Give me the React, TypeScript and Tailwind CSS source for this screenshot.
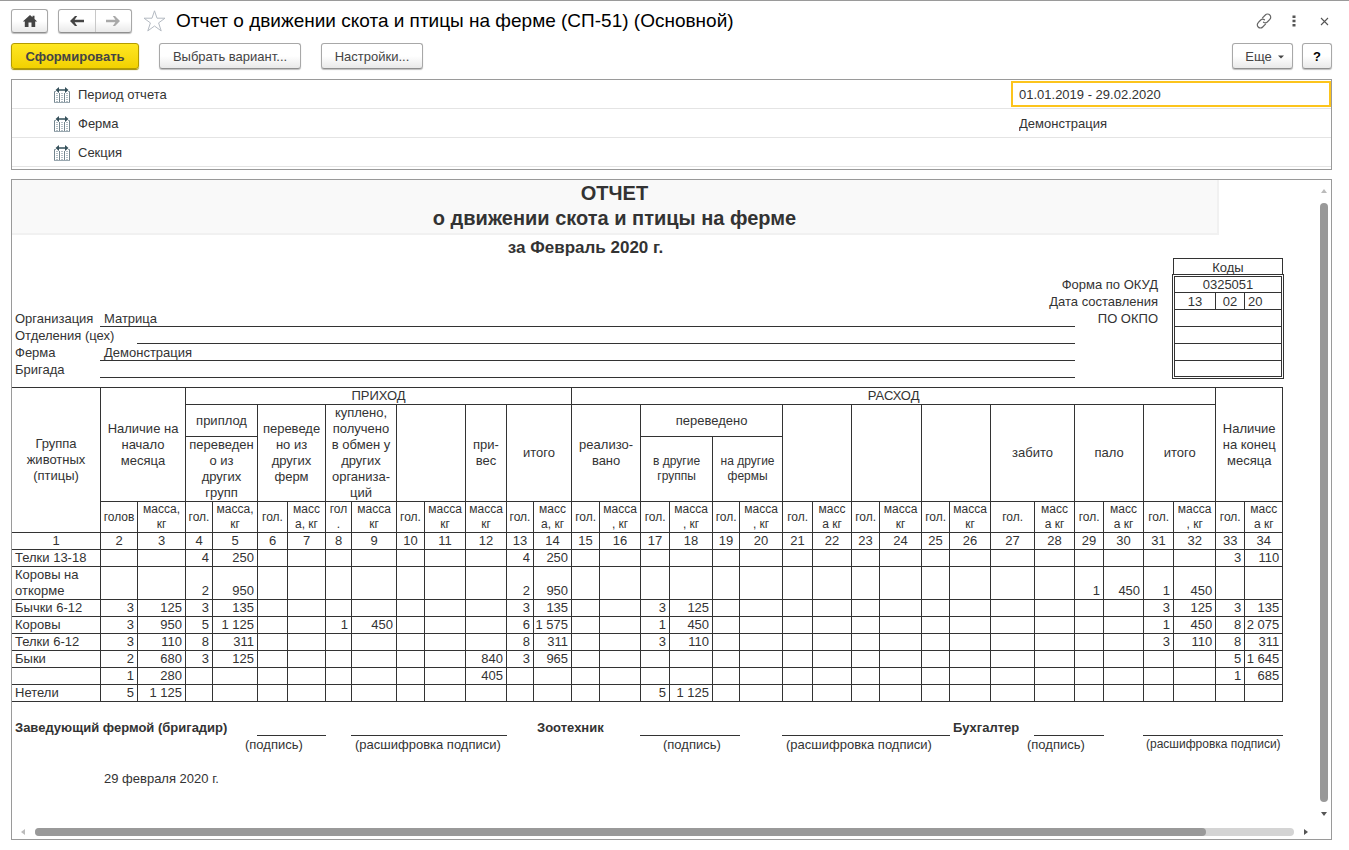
import { Fragment, type ReactNode } from "react";

const columnWidths = [
  89, 37, 48, 27, 45, 30, 38, 26, 45, 28, 41, 41, 27, 38, 28, 41, 29, 43, 27, 43, 30, 39, 28, 42, 28, 41, 44, 40, 29,
  40, 30, 42, 29, 38,
];

const unitLabels = [
  "голов", "масса,|кг", "гол.", "масса,|кг", "гол.", "масс|а, кг", "гол|.", "масса|кг", "гол.", "масса|кг",
  "масса|кг", "гол.", "масс|а, кг", "гол.", "масса|, кг", "гол.", "масса|, кг", "гол.", "масса|, кг", "гол.",
  "масс|а кг", "гол.", "масса|кг", "гол.", "масса|кг", "гол.", "масс|а кг", "гол.", "масс|а кг", "гол.",
  "масса|, кг", "гол.", "масс|а кг",
];

type Row = { name: string; tall?: boolean; values: Record<number, string> };

const rows: Row[] = [
  { name: "Телки 13-18", values: { 4: "4", 5: "250", 13: "4", 14: "250", 33: "3", 34: "110" } },
  {
    name: "Коровы на|откорме",
    tall: true,
    values: { 4: "2", 5: "950", 13: "2", 14: "950", 29: "1", 30: "450", 31: "1", 32: "450" },
  },
  {
    name: "Бычки 6-12",
    values: { 2: "3", 3: "125", 4: "3", 5: "135", 13: "3", 14: "135", 17: "3", 18: "125", 31: "3", 32: "125", 33: "3", 34: "135" },
  },
  {
    name: "Коровы",
    values: { 2: "3", 3: "950", 4: "5", 5: "1 125", 8: "1", 9: "450", 13: "6", 14: "1 575", 17: "1", 18: "450", 31: "1", 32: "450", 33: "8", 34: "2 075" },
  },
  {
    name: "Телки 6-12",
    values: { 2: "3", 3: "110", 4: "8", 5: "311", 13: "8", 14: "311", 17: "3", 18: "110", 31: "3", 32: "110", 33: "8", 34: "311" },
  },
  { name: "Быки", values: { 2: "2", 3: "680", 4: "3", 5: "125", 12: "840", 13: "3", 14: "965", 33: "5", 34: "1 645" } },
  { name: "", values: { 2: "1", 3: "280", 12: "405", 33: "1", 34: "685" } },
  { name: "Нетели", values: { 2: "5", 3: "1 125", 17: "5", 18: "1 125" } },
];

function Lines({ text }: { text: string }) {
  return (
    <>
      {text.split("|").map((line, i) => (
        <Fragment key={i}>
          {i > 0 && <br />}
          {line}
        </Fragment>
      ))}
    </>
  );
}

function Head({ text = "", cols = 1, span = 1, small = false }: { text?: string; cols?: number; span?: number; small?: boolean }) {
  return (
    <th
      colSpan={cols}
      rowSpan={span}
      className={`border-r border-b border-[#333] p-0 text-center align-middle font-normal ${
        small ? "text-[12px] leading-[15px]" : "leading-4"
      }`}
    >
      <Lines text={text} />
    </th>
  );
}

const buttonBase =
  "flex items-center justify-center rounded-[3px] border border-[#a8a8a8] border-b-[#8f8f8f] bg-linear-to-b from-white from-50% to-[#e9e9e9] shadow-[0_1px_1px_#bdbdbd]";

function ActionButton({ children, className }: { children: ReactNode; className: string }) {
  return (
    <button type="button" className={`${buttonBase} h-[26px] pt-px text-[13px] text-[#444] ${className}`}>
      {children}
    </button>
  );
}

function FieldIcon() {
  return (
    <svg width="16" height="16" viewBox="0 0 16 16" className="shrink-0" aria-hidden="true">
      <path d="M.5 4v11.500M5.500 6v9.500M10.500 6v9.500M15.500 4v11.500" stroke="#74868f" fill="none" />
      <path d="M0 15.500h16M0 4.500h2M14 4.500h2" stroke="#9aa8b0" fill="none" />
      <path d="M3 6v9M8 6v9M13 6v9" stroke="#b4bfc5" strokeWidth="2" strokeDasharray="1 1" fill="none" />
      <path d="M1.500 3 5 0v2.200h6V0l3.500 3L11 6V3.800H5V6z" fill="#35505b" />
    </svg>
  );
}

function Arrow({ color, flip }: { color: string; flip?: boolean }) {
  return (
    <svg width="16" height="12" viewBox="0 0 16 12" className={flip ? "rotate-180" : ""} aria-hidden="true">
      <path d="M1 6 6 1h2.200L5.600 4.800H15v2.400H5.600L8.200 11H6z" fill={color} />
    </svg>
  );
}

const filters = [
  { id: "period", label: "Период отчета", value: "01.01.2019 - 29.02.2020", active: true },
  { id: "farm", label: "Ферма", value: "Демонстрация", active: false },
  { id: "section", label: "Секция", value: "", active: false },
];

function Toolbar() {
  return (
    <header>
      <div className="flex h-6 items-center">
        <button type="button" aria-label="Домой" className={`${buttonBase} h-6 w-[37px]`}>
          <svg width="16" height="14" viewBox="0 0 16 14" aria-hidden="true">
            <path d="M8 1 .8 7.600h2V13H6.500V8.500h3V13h3.700V7.600h2L12.500 5V1.700h-2v1.600z" fill="#444" />
          </svg>
        </button>
        <div className={`${buttonBase} ml-[10px] h-6 w-[74px]`}>
          <button type="button" aria-label="Назад" className="flex h-full flex-1 items-center justify-center border-r border-[#c8c8c8]">
            <Arrow color="#444" />
          </button>
          <button type="button" aria-label="Вперед" className="flex h-full flex-1 items-center justify-center">
            <Arrow color="#a9a9a9" flip />
          </button>
        </div>
        <button type="button" aria-label="В избранное" className="ml-[10px]">
          <svg width="24" height="24" viewBox="0 0 24 24" aria-hidden="true">
            <path
              d="M12.500 1.800 15 9.200h8l-6.400 4.700 2.600 8-6.700-4.900-6.700 4.900 2.600-8L2 9.200h8z"
              fill="#fff"
              stroke="#b4bac2"
            />
          </svg>
        </button>
        <h1 className="ml-[10px] min-w-0 flex-1 truncate text-[19px] leading-6 text-black">
          Отчет о движении скота и птицы на ферме (СП-51) (Основной)
        </h1>
        <div className="flex items-center gap-[14px]">
          <button type="button" aria-label="Ссылка">
            <svg width="16" height="16" viewBox="0 0 16 16" fill="none" stroke="#666" strokeWidth="1.200" strokeLinecap="round" aria-hidden="true">
              <path d="M6.500 4.800 9.300 2a3 3 0 0 1 4.500 0 3 3 0 0 1 0 4.300L11.300 9a3 3 0 0 1-3.800.2" />
              <path d="M9.500 11.200 6.700 14a3 3 0 0 1-4.500 0 3 3 0 0 1 0-4.300L4.700 7a3 3 0 0 1 3.800-.2" />
            </svg>
          </button>
          <button type="button" aria-label="Меню" className="flex w-4 justify-center">
            <svg width="4" height="12" viewBox="0 0 4 12" fill="#555" aria-hidden="true">
              <path d="M.5.500h3v2.500h-3zM.5 4.700h3v2.500h-3zM.5 9h3v2.500h-3z" />
            </svg>
          </button>
          <button type="button" aria-label="Закрыть" className="flex w-4 justify-center">
            <svg width="9" height="9" viewBox="0 0 9 9" stroke="#555" strokeWidth="1.100" aria-hidden="true">
              <path d="M1 1l7 7M8 1 1 8" />
            </svg>
          </button>
        </div>
      </div>
      <div className="mt-[10px] flex">
        <button
          type="button"
          className="h-[26px] w-32 rounded-[3px] border border-[#b39b00] bg-linear-to-b from-[#ffe720] to-[#f2d100] pt-px text-[13px] font-bold text-[#444] shadow-[0_1px_1px_#a08c00]"
        >
          Сформировать
        </button>
        <ActionButton className="ml-5 w-[142px]">Выбрать вариант...</ActionButton>
        <ActionButton className="ml-5 w-[102px]">Настройки...</ActionButton>
        <ActionButton className="ml-auto w-[61px] gap-[6px] pl-1">
          Еще
          <svg width="6" height="4" viewBox="0 0 6 4" aria-hidden="true">
            <path d="M0 .5h6L3 3.500z" fill="#444" />
          </svg>
        </ActionButton>
        <ActionButton className="ml-[9px] w-[30px] font-bold text-black">?</ActionButton>
      </div>
    </header>
  );
}

function Filters() {
  return (
    <section className="mt-[10px] border border-[#9a9a9a] pb-[2px] text-[13px]">
      {filters.map((f) => (
        <div key={f.id} className="grid h-[29px] grid-cols-[1fr_320px] border-b border-[#e4e4e4]">
          <label htmlFor={f.id} className="flex items-center gap-2 pt-px pl-[42px]">
            <FieldIcon />
            {f.label}
          </label>
          <input
            id={f.id}
            defaultValue={f.value}
            className={`my-px min-w-0 border-2 px-[6px] pt-px outline-none ${f.active ? "border-[#fcc41c]" : "border-transparent"}`}
          />
        </div>
      ))}
    </section>
  );
}

function Codes() {
  const cell = "border-b border-[#333] p-0";
  return (
    <div className="col-start-3 row-span-7 row-start-1 self-start text-center leading-[15px]">
      <div className="mx-px h-4 border border-b-0 border-[#333] leading-[17px]">Коды</div>
      <div className="border-3 border-double border-[#333]">
        <table className="w-full table-fixed border-separate border-spacing-0">
          <colgroup>
            <col className="w-[41px]" />
            <col className="w-[29px]" />
            <col />
          </colgroup>
          <tbody>
            <tr className="h-4">
              <td colSpan={3} className={cell}>0325051</td>
            </tr>
            <tr className="h-[17px]">
              <td className={`${cell} border-r`}>13</td>
              <td className={`${cell} border-r`}>02</td>
              <td className={`${cell} pl-[3px] text-left`}>20</td>
            </tr>
            <tr className="h-[17px]"><td colSpan={3} className={cell} /></tr>
            <tr className="h-[17px]"><td colSpan={3} className={cell} /></tr>
            <tr className="h-[17px]"><td colSpan={3} className={cell} /></tr>
            <tr className="h-[15px]"><td colSpan={3} className="p-0" /></tr>
          </tbody>
        </table>
      </div>
    </div>
  );
}

function Requisite({ label, value = "", wide = false }: { label: string; value?: string; wide?: boolean }) {
  return (
    <div className="flex h-[17px]">
      <span className={`shrink-0 pl-[3px] ${wide ? "w-[125px]" : "w-[88px]"}`}>{label}</span>
      <span className="flex-1 border-b border-[#333] pl-1">{value}</span>
    </div>
  );
}

function ReportTable() {
  return (
    <table className="mt-[9px] w-[1271px] table-fixed border-separate border-spacing-0 border-t border-[#333] whitespace-nowrap">
      <colgroup>
        {columnWidths.map((w, i) => (
          <col key={i} style={{ width: w }} />
        ))}
      </colgroup>
      <thead>
        <tr className="h-[17px]">
          <Head text="Группа|животных|(птицы)" span={4} />
          <Head text="Наличие на|начало|месяца" cols={2} span={3} />
          <Head text="ПРИХОД" cols={11} />
          <Head text="РАСХОД" cols={18} />
          <Head text="Наличие|на конец|месяца" cols={2} span={3} />
        </tr>
        <tr className="h-8">
          <Head text="приплод" cols={2} />
          <Head text="переведе|но из|других|ферм" cols={2} span={2} />
          <Head text="куплено,|получено|в обмен у|других|организа-|ций" cols={2} span={2} />
          <Head cols={2} span={2} />
          <Head text="при-|вес" span={2} />
          <Head text="итого" cols={2} span={2} />
          <Head text="реализо-|вано" cols={2} span={2} />
          <Head text="переведено" cols={4} />
          <Head cols={2} span={2} />
          <Head cols={2} span={2} />
          <Head cols={2} span={2} />
          <Head text="забито" cols={2} span={2} />
          <Head text="пало" cols={2} span={2} />
          <Head text="итого" cols={2} span={2} />
        </tr>
        <tr className="h-[65px]">
          <Head text="переведен|о из|других|групп" cols={2} />
          <Head text="в другие|группы" cols={2} small />
          <Head text="на другие|фермы" cols={2} small />
        </tr>
        <tr className="h-[31px]">
          {unitLabels.map((u, i) => (
            <Head key={i} text={u} small />
          ))}
        </tr>
        <tr className="h-[17px]">
          {columnWidths.map((_, i) => (
            <Head key={i} text={String(i + 1)} />
          ))}
        </tr>
      </thead>
      <tbody>
        {rows.map((r, i) => (
          <tr key={i} className={r.tall ? "h-[33px]" : "h-[17px]"}>
            {columnWidths.map((_, c) =>
              c === 0 ? (
                <td key={c} className="border-r border-b border-[#333] p-0 pl-[3px] align-bottom leading-4">
                  <Lines text={r.name} />
                </td>
              ) : (
                <td key={c} className="border-r border-b border-[#333] p-0 pr-[3px] text-right align-bottom leading-4">
                  {r.values[c + 1]}
                </td>
              ),
            )}
          </tr>
        ))}
      </tbody>
    </table>
  );
}

function Signatures() {
  const line = "border-b border-[#333]";
  return (
    <div className="w-[1272px] whitespace-nowrap">
      <div className="mt-[17px] grid h-[17px] grid-cols-[245px_69px_25px_156px_30px_103px_100px_42px_168px_84px_70px_39px_140px] font-bold leading-[17px]">
        <span className="pl-[3px]">Заведующий фермой (бригадир)</span>
        <span className={line} />
        <span />
        <span className={line} />
        <span />
        <span>Зоотехник</span>
        <span className={line} />
        <span />
        <span className={line} />
        <span className="pl-[3px]">Бухгалтер</span>
        <span className={line} />
        <span />
        <span className={line} />
      </div>
      <div className="grid grid-cols-[110px_308px_123px_241px_119px_1fr] pl-[233px] leading-[17px]">
        <span>(подпись)</span>
        <span>(расшифровка подписи)</span>
        <span>(подпись)</span>
        <span>(расшифровка подписи)</span>
        <span>(подпись)</span>
        <span className="text-[12px]">(расшифровка подписи)</span>
      </div>
      <p className="mt-[17px] pl-[92px] leading-[17px]">29 февраля 2020 г.</p>
    </div>
  );
}

function Sheet() {
  return (
    <div className="min-w-0 flex-1 overflow-auto text-[13px]">
      <div className="h-[55px] w-[1207px] border-r-2 border-b-2 border-[#f1f1f1] bg-[#f9f9f9] pt-px text-center text-[20px] leading-[25px] font-bold">
        <h2>
          ОТЧЕТ
          <br />
          о движении скота и птицы на ферме
        </h2>
      </div>
      <p className="h-[23px] w-[1147px] text-center text-[17px] leading-[25px] font-bold">за Февраль 2020 г.</p>
      <div className="grid w-[1272px] grid-cols-[1063px_97px_112px] grid-rows-[18px_repeat(6,17px)] leading-[17px]">
        <Codes />
        <span className="col-span-2 col-start-1 row-start-2 pr-[14px] text-right">Форма по ОКУД</span>
        <span className="col-span-2 col-start-1 row-start-3 pr-[14px] text-right">Дата составления</span>
        <div className="col-start-1 row-span-4 row-start-4">
          <Requisite label="Организация" value="Матрица" />
          <Requisite label="Отделения (цех)" wide />
          <Requisite label="Ферма" value="Демонстрация" />
          <Requisite label="Бригада" />
        </div>
        <span className="col-start-2 row-start-4 pr-[14px] text-right">ПО ОКПО</span>
      </div>
      <ReportTable />
      <Signatures />
    </div>
  );
}

export default function App() {
  return (
    <div className="flex min-h-screen flex-col border-t border-[#9a9a9a] bg-white pt-2 pr-[17px] pb-[10px] pl-[11px] font-['Liberation_Sans',Arial,sans-serif] text-[#333]">
      <Toolbar />
      <Filters />
      <main className="mt-[9px] flex flex-1 flex-col border border-[#9a9a9a]">
        <div className="flex flex-1">
          <Sheet />
          <div className="flex w-[15px] flex-col items-center pt-[9px] pb-1">
            <svg width="6" height="4" viewBox="0 0 6 4" aria-hidden="true">
              <path d="M0 4h6L3 0z" fill="#bbb" />
            </svg>
            <div className="my-[10px] w-2 flex-1 rounded-full bg-[#999]" />
            <svg width="6" height="4" viewBox="0 0 6 4" aria-hidden="true">
              <path d="M0 0h6L3 4z" fill="#555" />
            </svg>
          </div>
        </div>
        <div className="flex h-[19px] items-center pt-[6px] pr-[23px] pb-[2px] pl-[9px]">
          <svg width="4" height="6" viewBox="0 0 4 6" aria-hidden="true">
            <path d="M4 0v6L0 3z" fill="#bbb" />
          </svg>
          <div className="mx-[10px] h-2 flex-1 rounded-full bg-[#d4d4d4]">
            <div className="h-2 w-[93%] rounded-full bg-[#999]" />
          </div>
          <svg width="4" height="6" viewBox="0 0 4 6" aria-hidden="true">
            <path d="M0 0v6l4-3z" fill="#555" />
          </svg>
        </div>
      </main>
    </div>
  );
}
